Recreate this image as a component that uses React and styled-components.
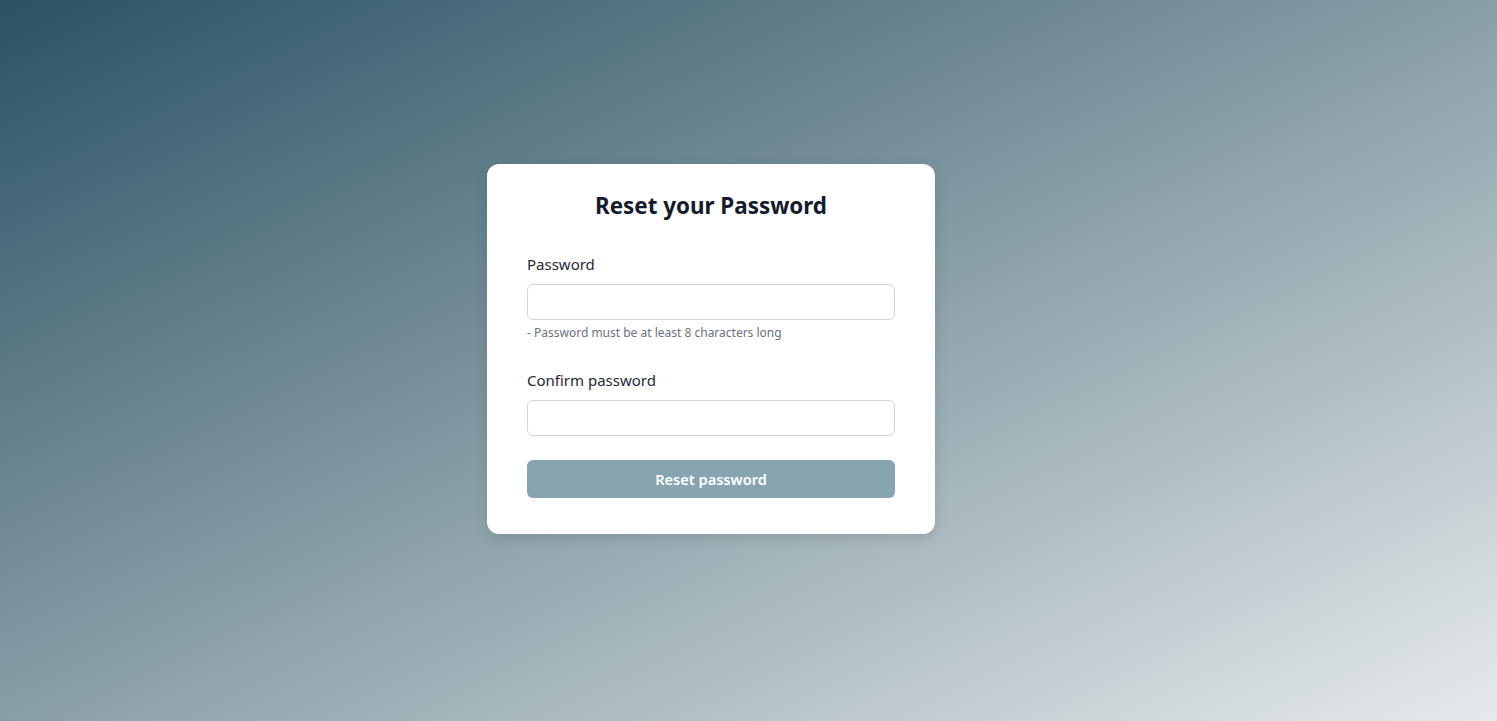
import React from "react";
import styled, { createGlobalStyle } from "styled-components";

const Global = createGlobalStyle`
  * { box-sizing: border-box; }
  html, body { margin: 0; padding: 0; height: 100%; }
  body { font-family: "Noto Sans", "Open Sans", sans-serif; }
  #root { min-height: 100vh; }
`;

const Page = styled.div`
  min-height: 100vh;
  display: flex;
  align-items: center;
  justify-content: center;
  background: linear-gradient(to bottom right, #2b5263 0%, #7f97a0 45%, #e6eaec 100%);
  padding: 0 75px 23px 0;
`;

const Card = styled.form`
  width: 448px;
  background: #ffffff;
  border-radius: 12px;
  padding: 26px 40px 36px;
  box-shadow: 0 4px 14px rgba(0, 0, 0, 0.12);
  display: flex;
  flex-direction: column;
`;

const Title = styled.h1`
  margin: 0 0 30px;
  text-align: center;
  font-size: 22.4px;
  line-height: 32px;
  font-weight: 700;
  color: #141b2b;
`;

const Label = styled.label`
  font-size: 15px;
  line-height: 24px;
  color: #1f2937;
  margin-top: ${(p) => p.$gap || 0}px;
  margin-bottom: 8px;
`;

const Input = styled.input`
  height: 36px;
  width: 100%;
  border: 1px solid #d1d5db;
  border-radius: 6px;
  padding: 0 12px;
  font-size: 15px;
  outline: none;
  background: #fff;
`;

const Hint = styled.p`
  margin: 5px 0 0;
  font-size: 12px;
  line-height: 16px;
  color: #6b7280;
`;

const Button = styled.button`
  margin-top: 24px;
  height: 38px;
  width: 100%;
  border: none;
  border-radius: 6px;
  background: #87a5b0;
  color: #ffffff;
  font-family: inherit;
  font-size: 14.6px;
  font-weight: 600;
  cursor: not-allowed;
`;

export default function App() {
  return (
    <>
      <Global />
      <Page>
        <Card onSubmit={(e) => e.preventDefault()}>
          <Title>Reset your Password</Title>
          <Label>Password</Label>
          <Input type="password" />
          <Hint>- Password must be at least 8 characters long</Hint>
          <Label $gap={27}>Confirm password</Label>
          <Input type="password" />
          <Button type="submit" disabled>Reset password</Button>
        </Card>
      </Page>
    </>
  );
}
